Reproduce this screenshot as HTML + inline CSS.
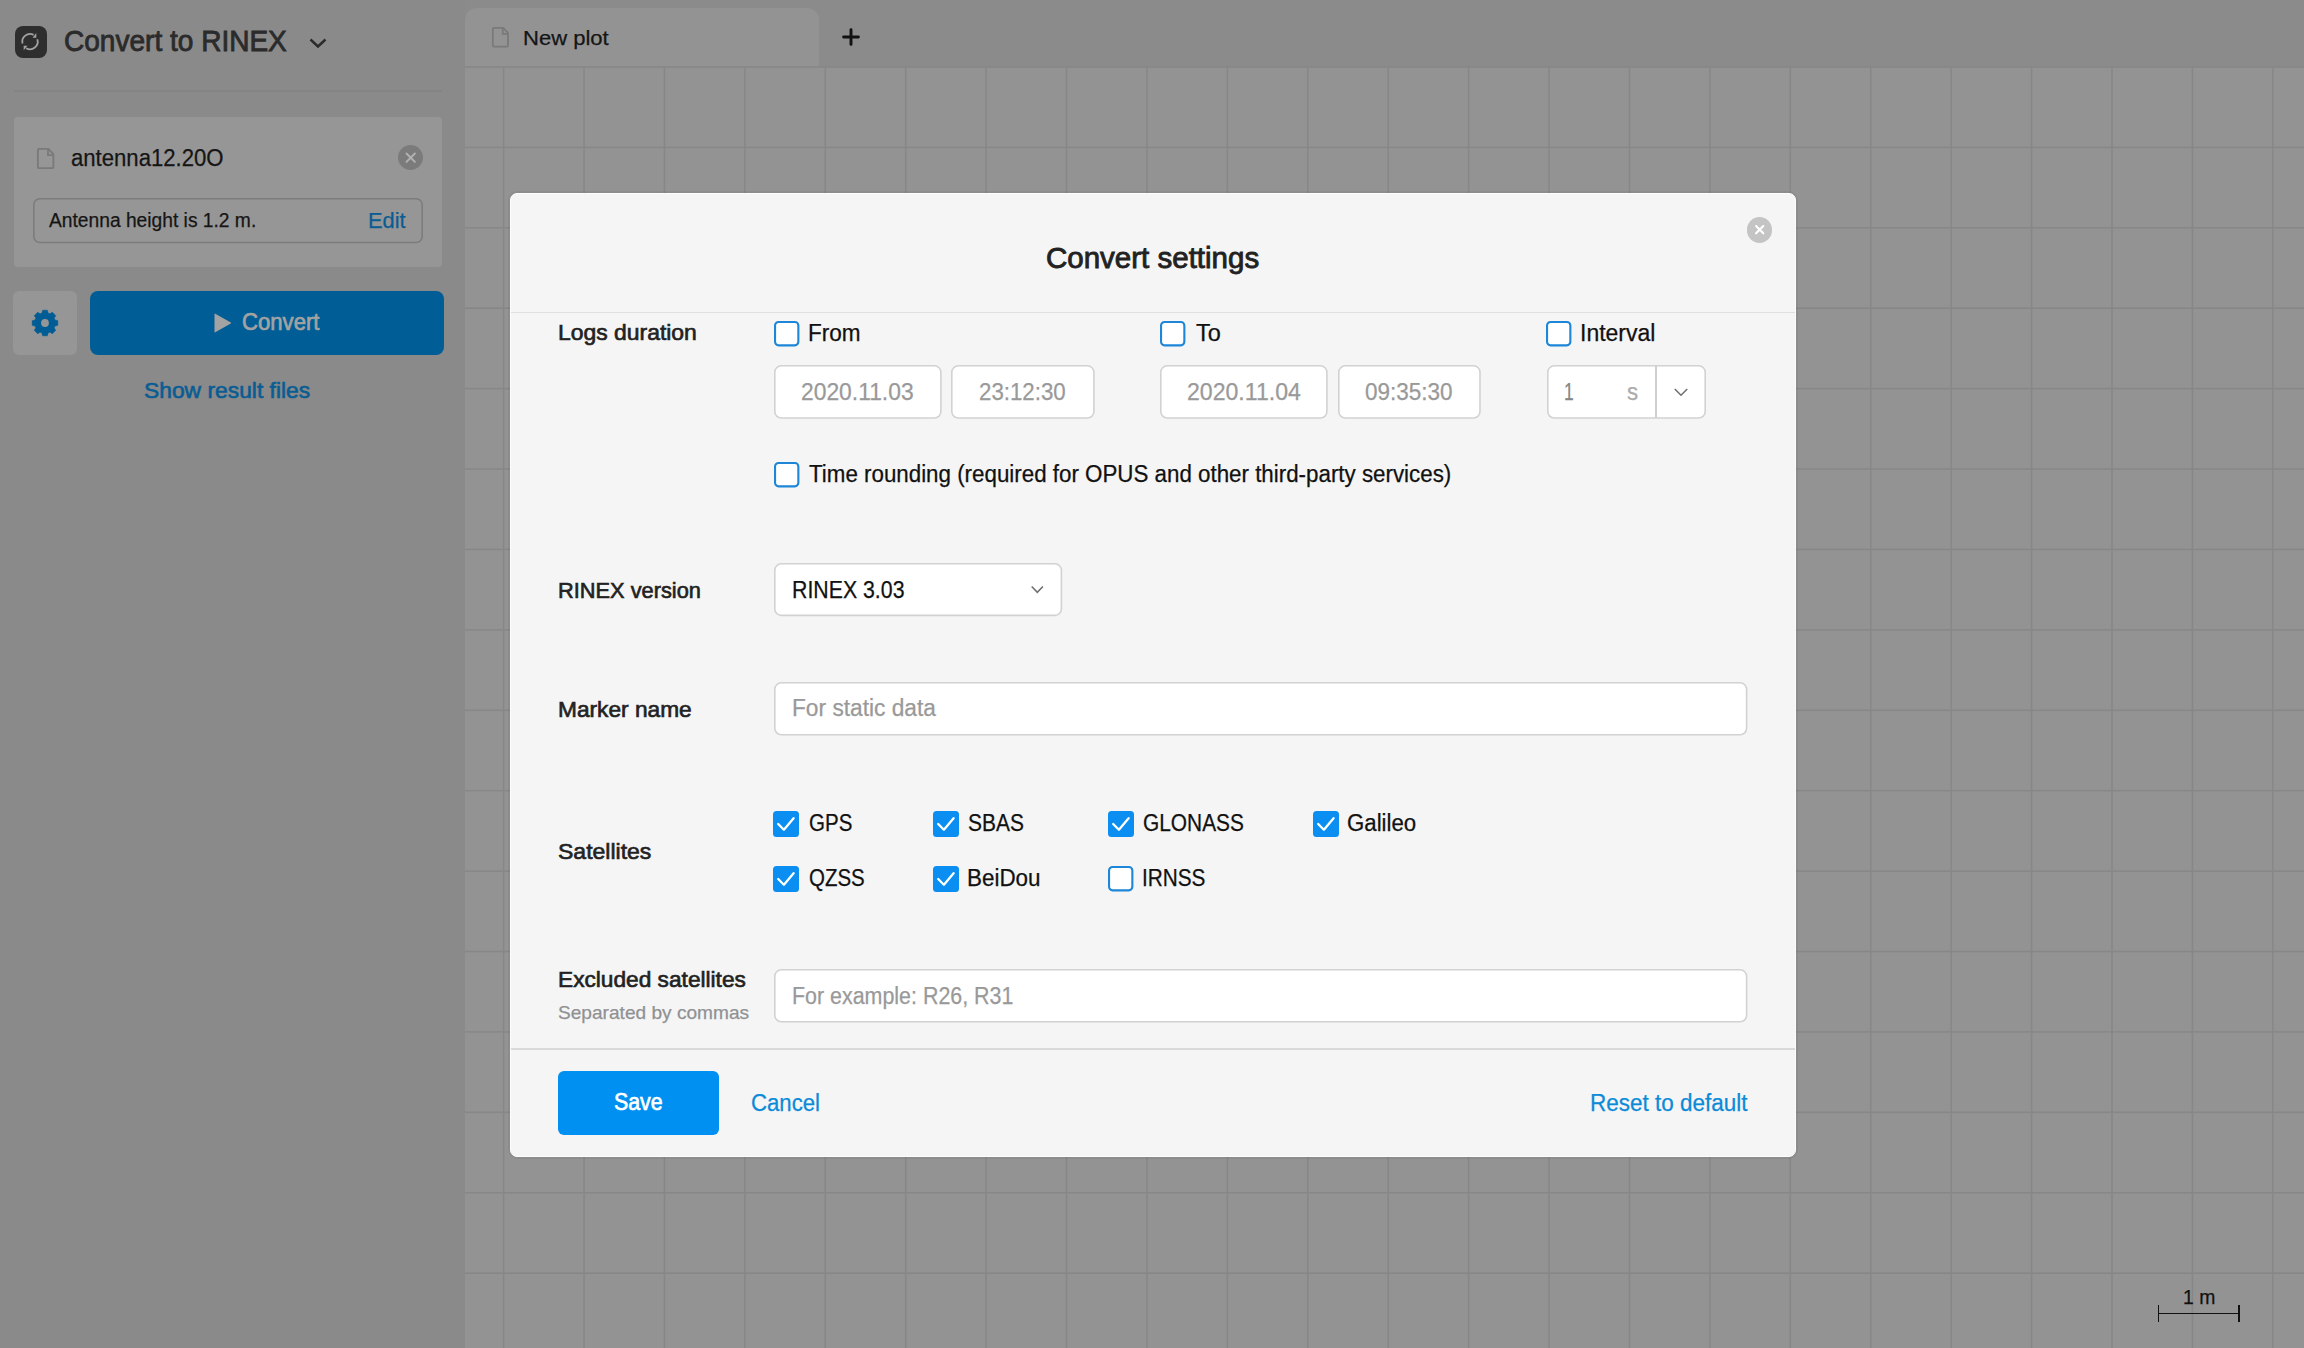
<!DOCTYPE html>
<html><head><meta charset="utf-8">
<style>
html,body{margin:0;padding:0;}
body{width:2304px;height:1348px;overflow:hidden;background:#939393;position:relative;font-family:"Liberation Sans",sans-serif;}
.abs{position:absolute;}
.t{position:absolute;white-space:nowrap;line-height:1;transform-origin:0 0;font-family:"Liberation Sans",sans-serif;}
.cb{position:absolute;width:21.4px;height:21.4px;border:2px solid #1d86d8;border-radius:4px;background:#fff;}
.cbc{position:absolute;width:26px;height:26px;border-radius:3.5px;background:#0a8ef2;}
.inp{position:absolute;box-sizing:border-box;border:1.6px solid #d0d0d0;border-radius:7px;background:#fff;}
</style></head><body>
<!-- tab header bar -->
<div class="abs" style="left:464px;top:0;width:1840px;height:67px;background:#8b8b8b;"></div>
<div class="abs" style="left:465px;top:8px;width:354px;height:59px;background:#939393;border-radius:12px 12px 0 0;"></div>
<svg class='abs' style='left:0;top:0' width='2304' height='1348'><rect x='502.85' y='67' width='1.5' height='1281' fill='#878787'/><rect x='583.27' y='67' width='1.5' height='1281' fill='#878787'/><rect x='663.69' y='67' width='1.5' height='1281' fill='#878787'/><rect x='744.11' y='67' width='1.5' height='1281' fill='#878787'/><rect x='824.53' y='67' width='1.5' height='1281' fill='#878787'/><rect x='904.95' y='67' width='1.5' height='1281' fill='#878787'/><rect x='985.37' y='67' width='1.5' height='1281' fill='#878787'/><rect x='1065.79' y='67' width='1.5' height='1281' fill='#878787'/><rect x='1146.21' y='67' width='1.5' height='1281' fill='#878787'/><rect x='1226.63' y='67' width='1.5' height='1281' fill='#878787'/><rect x='1307.05' y='67' width='1.5' height='1281' fill='#878787'/><rect x='1387.47' y='67' width='1.5' height='1281' fill='#878787'/><rect x='1467.89' y='67' width='1.5' height='1281' fill='#878787'/><rect x='1548.31' y='67' width='1.5' height='1281' fill='#878787'/><rect x='1628.73' y='67' width='1.5' height='1281' fill='#878787'/><rect x='1709.15' y='67' width='1.5' height='1281' fill='#878787'/><rect x='1789.57' y='67' width='1.5' height='1281' fill='#878787'/><rect x='1869.99' y='67' width='1.5' height='1281' fill='#878787'/><rect x='1950.41' y='67' width='1.5' height='1281' fill='#878787'/><rect x='2030.83' y='67' width='1.5' height='1281' fill='#878787'/><rect x='2111.25' y='67' width='1.5' height='1281' fill='#878787'/><rect x='2191.67' y='67' width='1.5' height='1281' fill='#878787'/><rect x='2272.09' y='67' width='1.5' height='1281' fill='#878787'/><rect x='464' y='66.25' width='1840' height='1.5' fill='#878787'/><rect x='464' y='146.66' width='1840' height='1.5' fill='#878787'/><rect x='464' y='227.07' width='1840' height='1.5' fill='#878787'/><rect x='464' y='307.48' width='1840' height='1.5' fill='#878787'/><rect x='464' y='387.89' width='1840' height='1.5' fill='#878787'/><rect x='464' y='468.30' width='1840' height='1.5' fill='#878787'/><rect x='464' y='548.71' width='1840' height='1.5' fill='#878787'/><rect x='464' y='629.12' width='1840' height='1.5' fill='#878787'/><rect x='464' y='709.53' width='1840' height='1.5' fill='#878787'/><rect x='464' y='789.94' width='1840' height='1.5' fill='#878787'/><rect x='464' y='870.35' width='1840' height='1.5' fill='#878787'/><rect x='464' y='950.76' width='1840' height='1.5' fill='#878787'/><rect x='464' y='1031.17' width='1840' height='1.5' fill='#878787'/><rect x='464' y='1111.58' width='1840' height='1.5' fill='#878787'/><rect x='464' y='1191.99' width='1840' height='1.5' fill='#878787'/><rect x='464' y='1272.40' width='1840' height='1.5' fill='#878787'/></svg>
<!-- sidebar -->
<div class="abs" style="left:0;top:0;width:464.7px;height:1348px;background:#8a8a8a;"></div>

<!-- app icon -->
<div class="abs" style="left:14.5px;top:26px;width:32px;height:32px;background:#2e2e2e;border-radius:8px;"></div>
<svg class="abs" style="left:14px;top:26px" width="32" height="32" viewBox="0 0 32 32">
  <path d="M8.53 17.51 A7.7 7.7 0 0 1 19.6 8.85" fill="none" stroke="#a3a3a3" stroke-width="1.8"/>
  <path d="M23.3 13.21 A7.7 7.7 0 0 1 12.2 22.3" fill="none" stroke="#a3a3a3" stroke-width="1.8"/>
  <path d="M22.3 7.1 L22.3 11.67 L18.55 11.67 Z" fill="#a3a3a3"/>
  <path d="M9.7 24.2 L9.7 19.63 L13.45 19.63 Z" fill="#a3a3a3"/>
</svg>
<!-- title chevron -->
<svg class="abs" style="left:308px;top:36px" width="20" height="14" viewBox="0 0 20 14">
  <path d="M2.5 3.5 L10 10.5 L17.5 3.5" fill="none" stroke="#2b2b2b" stroke-width="2.4"/>
</svg>
<div class="abs" style="left:14px;top:90px;width:428px;height:1.5px;background:#848484;"></div>
<!-- card -->
<div class="abs" style="left:14px;top:117px;width:428px;height:150px;background:#969696;border-radius:4px;"></div>
<svg class="abs" style="left:36.2px;top:147.8px" width="18.6" height="21.4" viewBox="0 0 20 23">
  <path d="M3 1 L13.4 1 L18.7 6.6 L18.7 20.6 Q18.7 21.6 17.7 21.6 L3 21.6 Q2 21.6 2 20.6 L2 2 Q2 1 3 1 Z" fill="none" stroke="#7a7a7a" stroke-width="2" stroke-linejoin="round"/>
  <path d="M12.9 1 L12.9 7.6 L18.7 7.6" fill="none" stroke="#7a7a7a" stroke-width="2"/>
</svg>
<div class="abs" style="left:397.5px;top:144.7px;width:25.4px;height:25.4px;border-radius:50%;background:#7b7b7b;"></div>
<svg class="abs" style="left:397.5px;top:144.7px" width="25.4" height="25.4" viewBox="0 0 25.4 25.4">
  <path d="M8.5 8.5 L16.9 16.9 M16.9 8.5 L8.5 16.9" stroke="#b2b2b2" stroke-width="1.9" stroke-linecap="round"/>
</svg>
<svg class='abs' style='left:31.50px;top:197.10px' width='392.00' height='47.30'><rect x='1.80' y='1.80' width='388.40' height='43.70' rx='6' fill='none' stroke='#7c7c7c' stroke-width='1.6'/></svg>

<!-- gear button -->
<div class="abs" style="left:13px;top:291px;width:64px;height:64px;background:#969696;border-radius:6px;"></div>
<svg class="abs" style="left:29px;top:307px" width="32" height="32" viewBox="-16 -16 32 32">
  <path d="M-3.04 -9.95 L-2.37 -12.78 L2.37 -12.78 L3.04 -9.95 L4.88 -9.18 L7.36 -10.71 L10.71 -7.36 L9.18 -4.88 L9.95 -3.04 L12.78 -2.37 L12.78 2.37 L9.95 3.04 L9.18 4.88 L10.71 7.36 L7.36 10.71 L4.88 9.18 L3.04 9.95 L2.37 12.78 L-2.37 12.78 L-3.04 9.95 L-4.88 9.18 L-7.36 10.71 L-10.71 7.36 L-9.18 4.88 L-9.95 3.04 L-12.78 2.37 L-12.78 -2.37 L-9.95 -3.04 L-9.18 -4.88 L-10.71 -7.36 L-7.36 -10.71 L-4.88 -9.18 Z" fill="#005c94" stroke="#005c94" stroke-width="0.6" stroke-linejoin="round"/>
  <circle r="3.9" fill="#969696"/>
</svg>
<!-- convert button -->
<div class="abs" style="left:90px;top:291px;width:354px;height:64px;background:#005d95;border-radius:8px;"></div>
<svg class="abs" style="left:212px;top:312px" width="22" height="22" viewBox="0 0 22 22">
  <path d="M2.5 2 Q2.5 1.2 3.3 1.7 L18.8 10.4 Q19.4 11 18.8 11.6 L3.3 20.3 Q2.5 20.8 2.5 20 Z" fill="#a3a3a3"/>
</svg>
<!-- plus -->
<svg class="abs" style="left:838.7px;top:24.9px" width="24" height="24" viewBox="0 0 24 24">
  <path d="M12 4.6 L12 19.4 M4.6 12 L19.4 12" stroke="#111" stroke-width="2.9" stroke-linecap="round"/>
</svg>
<!-- tab file icon -->
<svg class="abs" style="left:491.4px;top:27.4px" width="18.2" height="20.9" viewBox="0 0 20 23">
  <path d="M3 1 L13.4 1 L18.7 6.6 L18.7 20.6 Q18.7 21.6 17.7 21.6 L3 21.6 Q2 21.6 2 20.6 L2 2 Q2 1 3 1 Z" fill="none" stroke="#7a7a7a" stroke-width="2" stroke-linejoin="round"/>
  <path d="M12.9 1 L12.9 7.6 L18.7 7.6" fill="none" stroke="#7a7a7a" stroke-width="2"/>
</svg>
<!-- scale bar -->
<div class="abs" style="left:2158px;top:1312.5px;width:81px;height:1.9px;background:#111;"></div>
<div class="abs" style="left:2157.5px;top:1305.3px;width:1.7px;height:16.4px;background:#111;"></div>
<div class="abs" style="left:2238px;top:1305.3px;width:1.7px;height:16.4px;background:#111;"></div>

<!-- modal -->
<div class="abs" style="left:508px;top:191px;width:1290px;height:968px;border-radius:9px;background:rgba(0,0,0,0.045);"></div>
<div class="abs" style="left:510px;top:193px;width:1286px;height:964px;box-sizing:border-box;background:#f5f5f5;border:1px solid #fdfdfd;border-radius:7px;"></div>
<div class="abs" style="left:1747px;top:217.2px;width:25.4px;height:25.4px;border-radius:50%;background:#c4c4c4;"></div>
<svg class="abs" style="left:1747px;top:217.2px" width="25.4" height="25.4" viewBox="0 0 25.4 25.4">
  <path d="M9.1 9.1 L16.3 16.3 M16.3 9.1 L9.1 16.3" stroke="#fff" stroke-width="2.1" stroke-linecap="round"/>
</svg>
<div class="abs" style="left:511px;top:311.5px;width:1284px;height:1.5px;background:#dfdfdf;"></div>
<div class="abs" style="left:511px;top:1048.2px;width:1284px;height:1.6px;background:#d9d9d9;"></div>

<!-- checkboxes unchecked -->
<!-- inputs -->
<svg class='abs' style='left:773.00px;top:364.20px' width='169.70' height='55.80'><rect x='1.80' y='1.80' width='166.10' height='52.20' rx='6.5' fill='#fff' stroke='#d2d2d2' stroke-width='1.6'/></svg>
<svg class='abs' style='left:950.00px;top:364.20px' width='145.70' height='55.80'><rect x='1.80' y='1.80' width='142.10' height='52.20' rx='6.5' fill='#fff' stroke='#d2d2d2' stroke-width='1.6'/></svg>
<svg class='abs' style='left:1159.20px;top:364.20px' width='169.70' height='55.80'><rect x='1.80' y='1.80' width='166.10' height='52.20' rx='6.5' fill='#fff' stroke='#d2d2d2' stroke-width='1.6'/></svg>
<svg class='abs' style='left:1336.60px;top:364.20px' width='144.80' height='55.80'><rect x='1.80' y='1.80' width='141.20' height='52.20' rx='6.5' fill='#fff' stroke='#d2d2d2' stroke-width='1.6'/></svg>
<svg class='abs' style='left:1545.50px;top:364.20px' width='161.00' height='55.80'><rect x='1.80' y='1.80' width='157.40' height='52.20' rx='6.5' fill='#fff' stroke='#d2d2d2' stroke-width='1.6'/></svg>
<svg class='abs' style='left:773.40px;top:562.40px' width='290.20' height='55.20'><rect x='1.80' y='1.80' width='286.60' height='51.60' rx='6.5' fill='#fff' stroke='#d2d2d2' stroke-width='1.6'/></svg>
<svg class='abs' style='left:773.40px;top:681.00px' width='975.40' height='55.60'><rect x='1.80' y='1.80' width='971.80' height='52.00' rx='6.5' fill='#fff' stroke='#d2d2d2' stroke-width='1.6'/></svg>
<svg class='abs' style='left:773.40px;top:968.40px' width='975.40' height='55.60'><rect x='1.80' y='1.80' width='971.80' height='52.00' rx='6.5' fill='#fff' stroke='#d2d2d2' stroke-width='1.6'/></svg>
<svg class='abs' style='left:772.90px;top:320.00px' width='27.40' height='27.40'><rect x='2.05' y='2.05' width='23.30' height='23.30' rx='3.5' fill='#fff' stroke='#1d86d8' stroke-width='2.1'/></svg>
<svg class='abs' style='left:1159.00px;top:320.20px' width='27.40' height='27.40'><rect x='2.05' y='2.05' width='23.30' height='23.30' rx='3.5' fill='#fff' stroke='#1d86d8' stroke-width='2.1'/></svg>
<svg class='abs' style='left:1545.00px;top:320.10px' width='27.40' height='27.40'><rect x='2.05' y='2.05' width='23.30' height='23.30' rx='3.5' fill='#fff' stroke='#1d86d8' stroke-width='2.1'/></svg>
<svg class='abs' style='left:772.90px;top:461.40px' width='27.40' height='27.40'><rect x='2.05' y='2.05' width='23.30' height='23.30' rx='3.5' fill='#fff' stroke='#1d86d8' stroke-width='2.1'/></svg>
<svg class='abs' style='left:1107.30px;top:864.80px' width='27.40' height='27.40'><rect x='2.05' y='2.05' width='23.30' height='23.30' rx='3.5' fill='#fff' stroke='#1d86d8' stroke-width='2.1'/></svg>

<div class="abs" style="left:1655px;top:366px;width:1.6px;height:52px;background:#d0d0d0;"></div>
<svg class="abs" style="left:1672px;top:384px" width="18" height="14" viewBox="0 0 18 14">
  <path d="M2.8 5 L9 11.2 L15.2 5" fill="none" stroke="#707070" stroke-width="1.6"/>
</svg>
<svg class="abs" style="left:1028px;top:582px" width="18" height="14" viewBox="0 0 18 14">
  <path d="M3.7 4.5 L9.3 10.3 L14.9 4.5" fill="none" stroke="#707070" stroke-width="1.6"/>
</svg>
<!-- checked boxes -->
<div class='cbc' style='left:773.4px;top:810.7px;'></div>
<svg class='abs' style='left:773.4px;top:810.7px' width='26' height='26' viewBox='0 0 26 26'><path d='M5.2 13 L10.9 18.7 L20.6 7.2' fill='none' stroke='#fff' stroke-width='2.3' stroke-linecap='round' stroke-linejoin='round'/></svg>
<div class='cbc' style='left:932.7px;top:810.7px;'></div>
<svg class='abs' style='left:932.7px;top:810.7px' width='26' height='26' viewBox='0 0 26 26'><path d='M5.2 13 L10.9 18.7 L20.6 7.2' fill='none' stroke='#fff' stroke-width='2.3' stroke-linecap='round' stroke-linejoin='round'/></svg>
<div class='cbc' style='left:1108.3px;top:810.7px;'></div>
<svg class='abs' style='left:1108.3px;top:810.7px' width='26' height='26' viewBox='0 0 26 26'><path d='M5.2 13 L10.9 18.7 L20.6 7.2' fill='none' stroke='#fff' stroke-width='2.3' stroke-linecap='round' stroke-linejoin='round'/></svg>
<div class='cbc' style='left:1312.5px;top:810.7px;'></div>
<svg class='abs' style='left:1312.5px;top:810.7px' width='26' height='26' viewBox='0 0 26 26'><path d='M5.2 13 L10.9 18.7 L20.6 7.2' fill='none' stroke='#fff' stroke-width='2.3' stroke-linecap='round' stroke-linejoin='round'/></svg>
<div class='cbc' style='left:773.4px;top:865.8px;'></div>
<svg class='abs' style='left:773.4px;top:865.8px' width='26' height='26' viewBox='0 0 26 26'><path d='M5.2 13 L10.9 18.7 L20.6 7.2' fill='none' stroke='#fff' stroke-width='2.3' stroke-linecap='round' stroke-linejoin='round'/></svg>
<div class='cbc' style='left:932.7px;top:865.8px;'></div>
<svg class='abs' style='left:932.7px;top:865.8px' width='26' height='26' viewBox='0 0 26 26'><path d='M5.2 13 L10.9 18.7 L20.6 7.2' fill='none' stroke='#fff' stroke-width='2.3' stroke-linecap='round' stroke-linejoin='round'/></svg>

<!-- save button -->
<div class="abs" style="left:558.2px;top:1070.9px;width:160.6px;height:63.9px;background:#0090f2;border-radius:6px;"></div>
<div class='t' style='left:64.07px;top:25.70px;font-size:30px;font-weight:400;color:#2b2b2b;transform:scaleX(0.9346);-webkit-text-stroke:0.87px #2b2b2b;'>Convert to RINEX</div>
<div class='t' style='left:70.54px;top:146.70px;font-size:23px;font-weight:400;color:#151515;transform:scaleX(0.9618);-webkit-text-stroke:0.25px #151515;'>antenna12.20O</div>
<div class='t' style='left:48.90px;top:210.30px;font-size:20px;font-weight:400;color:#151515;transform:scaleX(0.9607);-webkit-text-stroke:0.25px #151515;'>Antenna height is 1.2 m.</div>
<div class='t' style='left:368.31px;top:209.60px;font-size:22px;font-weight:400;color:#0a5d93;transform:scaleX(0.9944);-webkit-text-stroke:0.25px #0a5d93;'>Edit</div>
<div class='t' style='left:242.44px;top:311.40px;font-size:23px;font-weight:400;color:#a3a3a3;transform:scaleX(0.9625);-webkit-text-stroke:0.67px #a3a3a3;'>Convert</div>
<div class='t' style='left:144.26px;top:380.30px;font-size:22px;font-weight:400;color:#0a5d93;transform:scaleX(1.0377);-webkit-text-stroke:0.64px #0a5d93;'>Show result files</div>
<div class='t' style='left:522.95px;top:26.50px;font-size:21px;font-weight:400;color:#151515;transform:scaleX(1.0494);-webkit-text-stroke:0.25px #151515;'>New plot</div>
<div class='t' style='left:2182.73px;top:1287.40px;font-size:20px;font-weight:400;color:#111;transform:scaleX(0.9677);-webkit-text-stroke:0.25px #111;'>1 m</div>
<div class='t' style='left:1046.48px;top:244.00px;font-size:29px;font-weight:400;color:#222;transform:scaleX(1.0173);-webkit-text-stroke:0.84px #222;'>Convert settings</div>
<div class='t' style='left:557.73px;top:322.00px;font-size:22.4px;font-weight:400;color:#222;transform:scaleX(1.0231);-webkit-text-stroke:0.65px #222;'>Logs duration</div>
<div class='t' style='left:808.04px;top:322.00px;font-size:23px;font-weight:400;color:#111;transform:scaleX(0.9804);-webkit-text-stroke:0.25px #111;'>From</div>
<div class='t' style='left:1195.70px;top:322.00px;font-size:23px;font-weight:400;color:#111;transform:scaleX(1.0208);-webkit-text-stroke:0.25px #111;'>To</div>
<div class='t' style='left:1580.00px;top:322.00px;font-size:23px;font-weight:400;color:#111;transform:scaleX(0.9986);-webkit-text-stroke:0.25px #111;'>Interval</div>
<div class='t' style='left:801.21px;top:380.50px;font-size:23px;font-weight:400;color:#999;transform:scaleX(0.9929);-webkit-text-stroke:0.25px #999;'>2020.11.03</div>
<div class='t' style='left:979.33px;top:380.50px;font-size:23px;font-weight:400;color:#999;transform:scaleX(0.9682);-webkit-text-stroke:0.25px #999;'>23:12:30</div>
<div class='t' style='left:1187.10px;top:380.50px;font-size:23px;font-weight:400;color:#999;transform:scaleX(1.0036);-webkit-text-stroke:0.25px #999;'>2020.11.04</div>
<div class='t' style='left:1364.92px;top:380.50px;font-size:23px;font-weight:400;color:#999;transform:scaleX(0.9773);-webkit-text-stroke:0.25px #999;'>09:35:30</div>
<div class='t' style='left:1564.48px;top:381.30px;font-size:23px;font-weight:400;color:#858585;transform:scaleX(0.7600);-webkit-text-stroke:0.25px #858585;'>1</div>
<div class='t' style='left:1627.43px;top:381.30px;font-size:23px;font-weight:400;color:#aaa;transform:scaleX(0.9700);-webkit-text-stroke:0.25px #aaa;'>s</div>
<div class='t' style='left:809.30px;top:463.30px;font-size:23px;font-weight:400;color:#111;transform:scaleX(0.9712);-webkit-text-stroke:0.25px #111;'>Time rounding (required for OPUS and other third-party services)</div>
<div class='t' style='left:557.72px;top:579.90px;font-size:22.2px;font-weight:400;color:#222;transform:scaleX(0.9819);-webkit-text-stroke:0.64px #222;'>RINEX version</div>
<div class='t' style='left:791.95px;top:579.00px;font-size:23px;font-weight:400;color:#111;transform:scaleX(0.9261);-webkit-text-stroke:0.25px #111;'>RINEX 3.03</div>
<div class='t' style='left:557.68px;top:698.80px;font-size:22.2px;font-weight:400;color:#222;transform:scaleX(1.0233);-webkit-text-stroke:0.64px #222;'>Marker name</div>
<div class='t' style='left:791.82px;top:697.40px;font-size:23px;font-weight:400;color:#999;transform:scaleX(0.9875);-webkit-text-stroke:0.25px #999;'>For static data</div>
<div class='t' style='left:557.66px;top:840.50px;font-size:22.2px;font-weight:400;color:#222;transform:scaleX(1.0371);-webkit-text-stroke:0.64px #222;'>Satellites</div>
<div class='t' style='left:808.71px;top:812.30px;font-size:23px;font-weight:400;color:#111;transform:scaleX(0.8915);-webkit-text-stroke:0.25px #111;'>GPS</div>
<div class='t' style='left:967.79px;top:812.30px;font-size:23px;font-weight:400;color:#111;transform:scaleX(0.9100);-webkit-text-stroke:0.25px #111;'>SBAS</div>
<div class='t' style='left:1143.39px;top:812.30px;font-size:23px;font-weight:400;color:#111;transform:scaleX(0.9073);-webkit-text-stroke:0.25px #111;'>GLONASS</div>
<div class='t' style='left:1347.23px;top:812.30px;font-size:23px;font-weight:400;color:#111;transform:scaleX(0.9657);-webkit-text-stroke:0.25px #111;'>Galileo</div>
<div class='t' style='left:808.71px;top:866.60px;font-size:23px;font-weight:400;color:#111;transform:scaleX(0.8902);-webkit-text-stroke:0.25px #111;'>QZSS</div>
<div class='t' style='left:966.75px;top:866.60px;font-size:23px;font-weight:400;color:#111;transform:scaleX(0.9750);-webkit-text-stroke:0.25px #111;'>BeiDou</div>
<div class='t' style='left:1142.49px;top:866.60px;font-size:23px;font-weight:400;color:#111;transform:scaleX(0.9029);-webkit-text-stroke:0.25px #111;'>IRNSS</div>
<div class='t' style='left:557.98px;top:969.00px;font-size:22.2px;font-weight:400;color:#222;transform:scaleX(1.0224);-webkit-text-stroke:0.64px #222;'>Excluded satellites</div>
<div class='t' style='left:557.79px;top:1003.30px;font-size:19px;font-weight:400;color:#909193;transform:scaleX(1.0053);-webkit-text-stroke:0.25px #909193;'>Separated by commas</div>
<div class='t' style='left:792.14px;top:985.00px;font-size:23px;font-weight:400;color:#999;transform:scaleX(0.9311);-webkit-text-stroke:0.25px #999;'>For example: R26, R31</div>
<div class='t' style='left:614.17px;top:1091.00px;font-size:23px;font-weight:400;color:#fff;transform:scaleX(0.9275);-webkit-text-stroke:0.67px #fff;'>Save</div>
<div class='t' style='left:750.84px;top:1092.00px;font-size:23px;font-weight:400;color:#0b8ad8;transform:scaleX(0.9638);-webkit-text-stroke:0.25px #0b8ad8;'>Cancel</div>
<div class='t' style='left:1590.15px;top:1091.60px;font-size:23px;font-weight:400;color:#0b8ad8;transform:scaleX(0.9774);-webkit-text-stroke:0.25px #0b8ad8;'>Reset to default</div>

</body></html>
